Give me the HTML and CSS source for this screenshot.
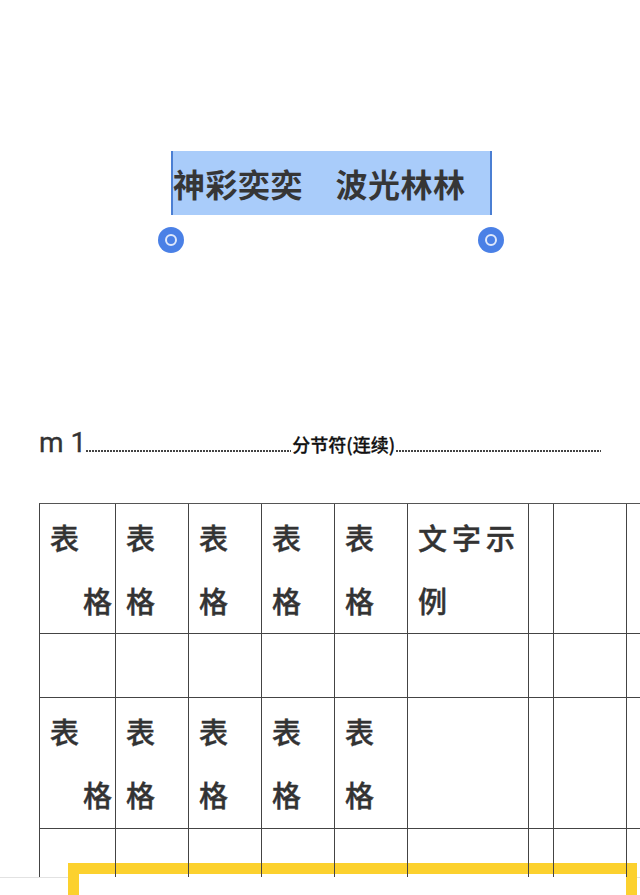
FILE: index.html
```html
<!DOCTYPE html>
<html lang="zh-CN">
<head>
<meta charset="utf-8">
<title>文档</title>
<link rel="stylesheet" href="styles.css">
</head>
<body>
<div class="page">
  <div class="title-row">
    <span class="sel">神彩奕奕　波光林林<span class="handle handle-l"></span><span class="handle handle-r"></span></span>
  </div>
  <div class="break-row">
    <span class="mark">m 1</span><span class="leader"></span><span class="break-label">分节符(连续)</span><span class="leader"></span>
  </div>
  <div class="grid">
    <div class="cell"><div>表</div><div class="r">格</div></div>
    <div class="cell"><div>表</div><div>格</div></div>
    <div class="cell"><div>表</div><div>格</div></div>
    <div class="cell"><div>表</div><div>格</div></div>
    <div class="cell"><div>表</div><div>格</div></div>
    <div class="cell"><div class="wide">文字示</div><div class="wide">例</div></div>
    <div class="cell"></div>
    <div class="cell"></div>
    <div class="cell"></div>

    <div class="cell"></div>
    <div class="cell"></div>
    <div class="cell"></div>
    <div class="cell"></div>
    <div class="cell"></div>
    <div class="cell"></div>
    <div class="cell"></div>
    <div class="cell"></div>
    <div class="cell"></div>

    <div class="cell"><div>表</div><div class="r">格</div></div>
    <div class="cell"><div>表</div><div>格</div></div>
    <div class="cell"><div>表</div><div>格</div></div>
    <div class="cell"><div>表</div><div>格</div></div>
    <div class="cell"><div>表</div><div>格</div></div>
    <div class="cell"></div>
    <div class="cell"></div>
    <div class="cell"></div>
    <div class="cell"></div>

    <div class="cell"></div>
    <div class="cell"></div>
    <div class="cell"></div>
    <div class="cell"></div>
    <div class="cell"></div>
    <div class="cell"></div>
    <div class="cell"></div>
    <div class="cell"></div>
    <div class="cell"></div>
  </div>
</div>
<div class="page-edge"></div>
<div class="frame"></div>
</body>
</html>
```

FILE: styles.css
```css
html, body {
  margin: 0;
  padding: 0;
  background: #ffffff;
  overflow: hidden;
  width: 640px;
  height: 895px;
}

body {
  position: relative;
  font-family: "Noto Sans CJK SC", "Noto Sans", sans-serif;
  color: #333333;
}

.page {
  position: relative;
  z-index: 2;
  height: 877px;
  overflow: hidden;
}

.title-row {
  padding-top: 151px;
  padding-left: 171px;
  line-height: 64px;
  height: 64px;
}

.sel {
  position: relative;
  display: inline-block;
  box-sizing: border-box;
  width: 321px;
  height: 64px;
  background: #a9ccfa;
  border-left: 2px solid #4b7fd3;
  border-right: 2px solid #4b7fd3;
  font-size: 32px;
  letter-spacing: 0.5px;
  font-weight: 700;
  color: #363636;
  white-space: nowrap;
}

.handle {
  position: absolute;
  top: 76px;
  width: 26px;
  height: 26px;
  border-radius: 50%;
  background: #4a80e6;
}

.handle::after {
  content: "";
  position: absolute;
  left: 7px;
  top: 7px;
  width: 8px;
  height: 8px;
  border: 2px solid #dfe8fb;
  border-radius: 50%;
}

.handle-l {
  left: -15px;
}

.handle-r {
  right: -14px;
}

.break-row {
  display: flex;
  align-items: baseline;
  margin-top: 212px;
  padding: 0 39px;
  line-height: 32px;
}

.mark {
  font-family: Roboto, "Liberation Sans", sans-serif;
  font-size: 28px;
  color: #333333;
  white-space: pre;
  -webkit-text-stroke: 0.3px #333333;
}

.leader {
  flex: 1;
  height: 2px;
  background-image: radial-gradient(circle at 1px 1px, #444444 0.8px, rgba(68, 68, 68, 0) 1.2px);
  background-size: 3px 2px;
  background-repeat: repeat-x;
}

.break-label {
  font-size: 18px;
  font-weight: 500;
  color: #111111;
  margin: 0 1px;
  -webkit-text-stroke: 0.3px #111111;
}

.grid {
  display: grid;
  grid-template-columns: 76px 73px 73px 73px 73px 121px 25px 73px 73px;
  grid-template-rows: 130px 64px 131px 64px;
  width: max-content;
  margin-top: 43px;
  margin-left: 39px;
  border-left: 1px solid #444444;
  border-top: 1px solid #555555;
}

.cell {
  box-sizing: border-box;
  border-right: 1px solid #444444;
  border-bottom: 1px solid #444444;
  padding: 2px 3px 0 10px;
  font-size: 29px;
  line-height: 63px;
  font-weight: 500;
  color: #333333;
  white-space: nowrap;
  -webkit-text-stroke: 0.4px #333333;
}

.cell .r {
  text-align: right;
}

.cell .wide {
  letter-spacing: 5px;
}

.page-edge {
  height: 1px;
  background: #e2e2e2;
}

.frame {
  position: absolute;
  z-index: 1;
  left: 68px;
  top: 863px;
  width: 569px;
  height: 80px;
  box-sizing: border-box;
  border: 11px solid #fcd12e;
  background: #ffffff;
}
```
